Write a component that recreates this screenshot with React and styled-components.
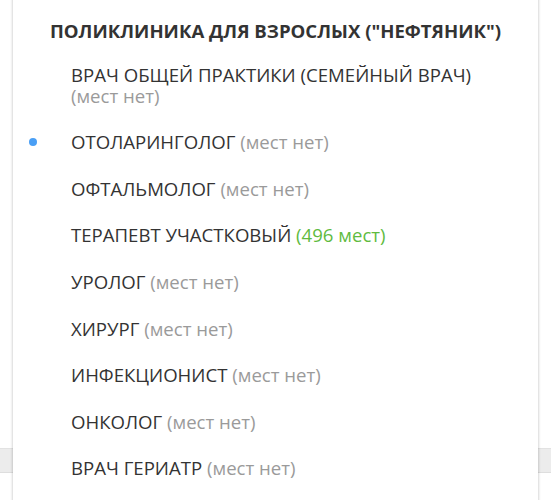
import React from "react";
import styled, { createGlobalStyle } from "styled-components";

const Global = createGlobalStyle`
  html, body { margin: 0; padding: 0; background: #fff; }
  body { font-family: "Open Sans", "Noto Sans", sans-serif; -webkit-font-smoothing: antialiased; }
`;

const Page = styled.div`
  position: relative;
  width: 551px;
  height: 500px;
  overflow: hidden;
  background: #fff;
`;

const Backdrop = styled.div`
  display: flex;
  flex-direction: column;
  padding-top: 448px;
`;

const Strip = styled.div`
  height: 23px;
  background: #ececec;
  border-top: 1px solid #e2e2e2;
  border-bottom: 1px solid #dedede;
`;

const Panel = styled.div`
  position: absolute;
  top: -10px;
  left: 13px;
  width: 525px;
  height: 530px;
  background: #fff;
  box-shadow: 0 0 3px rgba(0, 0, 0, 0.28);
  display: flex;
  flex-direction: column;
  padding-top: 10px;
  box-sizing: border-box;
`;

const Heading = styled.div`
  padding: 20px 0 10px;
  text-align: center;
  font-weight: 700;
  font-size: 18.6px;
  line-height: 22px;
  color: #333;
`;

const List = styled.ul`
  list-style: none;
  margin: 0;
  padding: 0;
`;

const Item = styled.li`
  position: relative;
  padding: 13px 30px 13px 58px;
  font-size: 18.6px;
  line-height: 20.6px;
  color: #333;
`;

const Dot = styled.span`
  position: absolute;
  left: 16px;
  top: 50%;
  width: 8px;
  height: 8px;
  margin-top: -4px;
  border-radius: 50%;
  background: #4a9ff5;
`;

const Note = styled.span`
  color: ${(p) => (p.$ok ? "#5fbb3f" : "#9a9a9a")};
`;

const items = [
  { name: "ВРАЧ ОБЩЕЙ ПРАКТИКИ (СЕМЕЙНЫЙ ВРАЧ)", note: "(мест нет)" },
  { name: "ОТОЛАРИНГОЛОГ", note: "(мест нет)", active: true },
  { name: "ОФТАЛЬМОЛОГ", note: "(мест нет)" },
  { name: "ТЕРАПЕВТ УЧАСТКОВЫЙ", note: "(496 мест)", ok: true },
  { name: "УРОЛОГ", note: "(мест нет)" },
  { name: "ХИРУРГ", note: "(мест нет)" },
  { name: "ИНФЕКЦИОНИСТ", note: "(мест нет)" },
  { name: "ОНКОЛОГ", note: "(мест нет)" },
  { name: "ВРАЧ ГЕРИАТР", note: "(мест нет)" },
];

export default function App() {
  return (
    <Page>
      <Global />
      <Backdrop>
        <Strip />
      </Backdrop>
      <Panel>
        <Heading>ПОЛИКЛИНИКА ДЛЯ ВЗРОСЛЫХ ("НЕФТЯНИК")</Heading>
        <List>
          {items.map((it) => (
            <Item key={it.name}>
              {it.active && <Dot />}
              {it.name} <Note $ok={it.ok}>{it.note}</Note>
            </Item>
          ))}
        </List>
      </Panel>
    </Page>
  );
}
